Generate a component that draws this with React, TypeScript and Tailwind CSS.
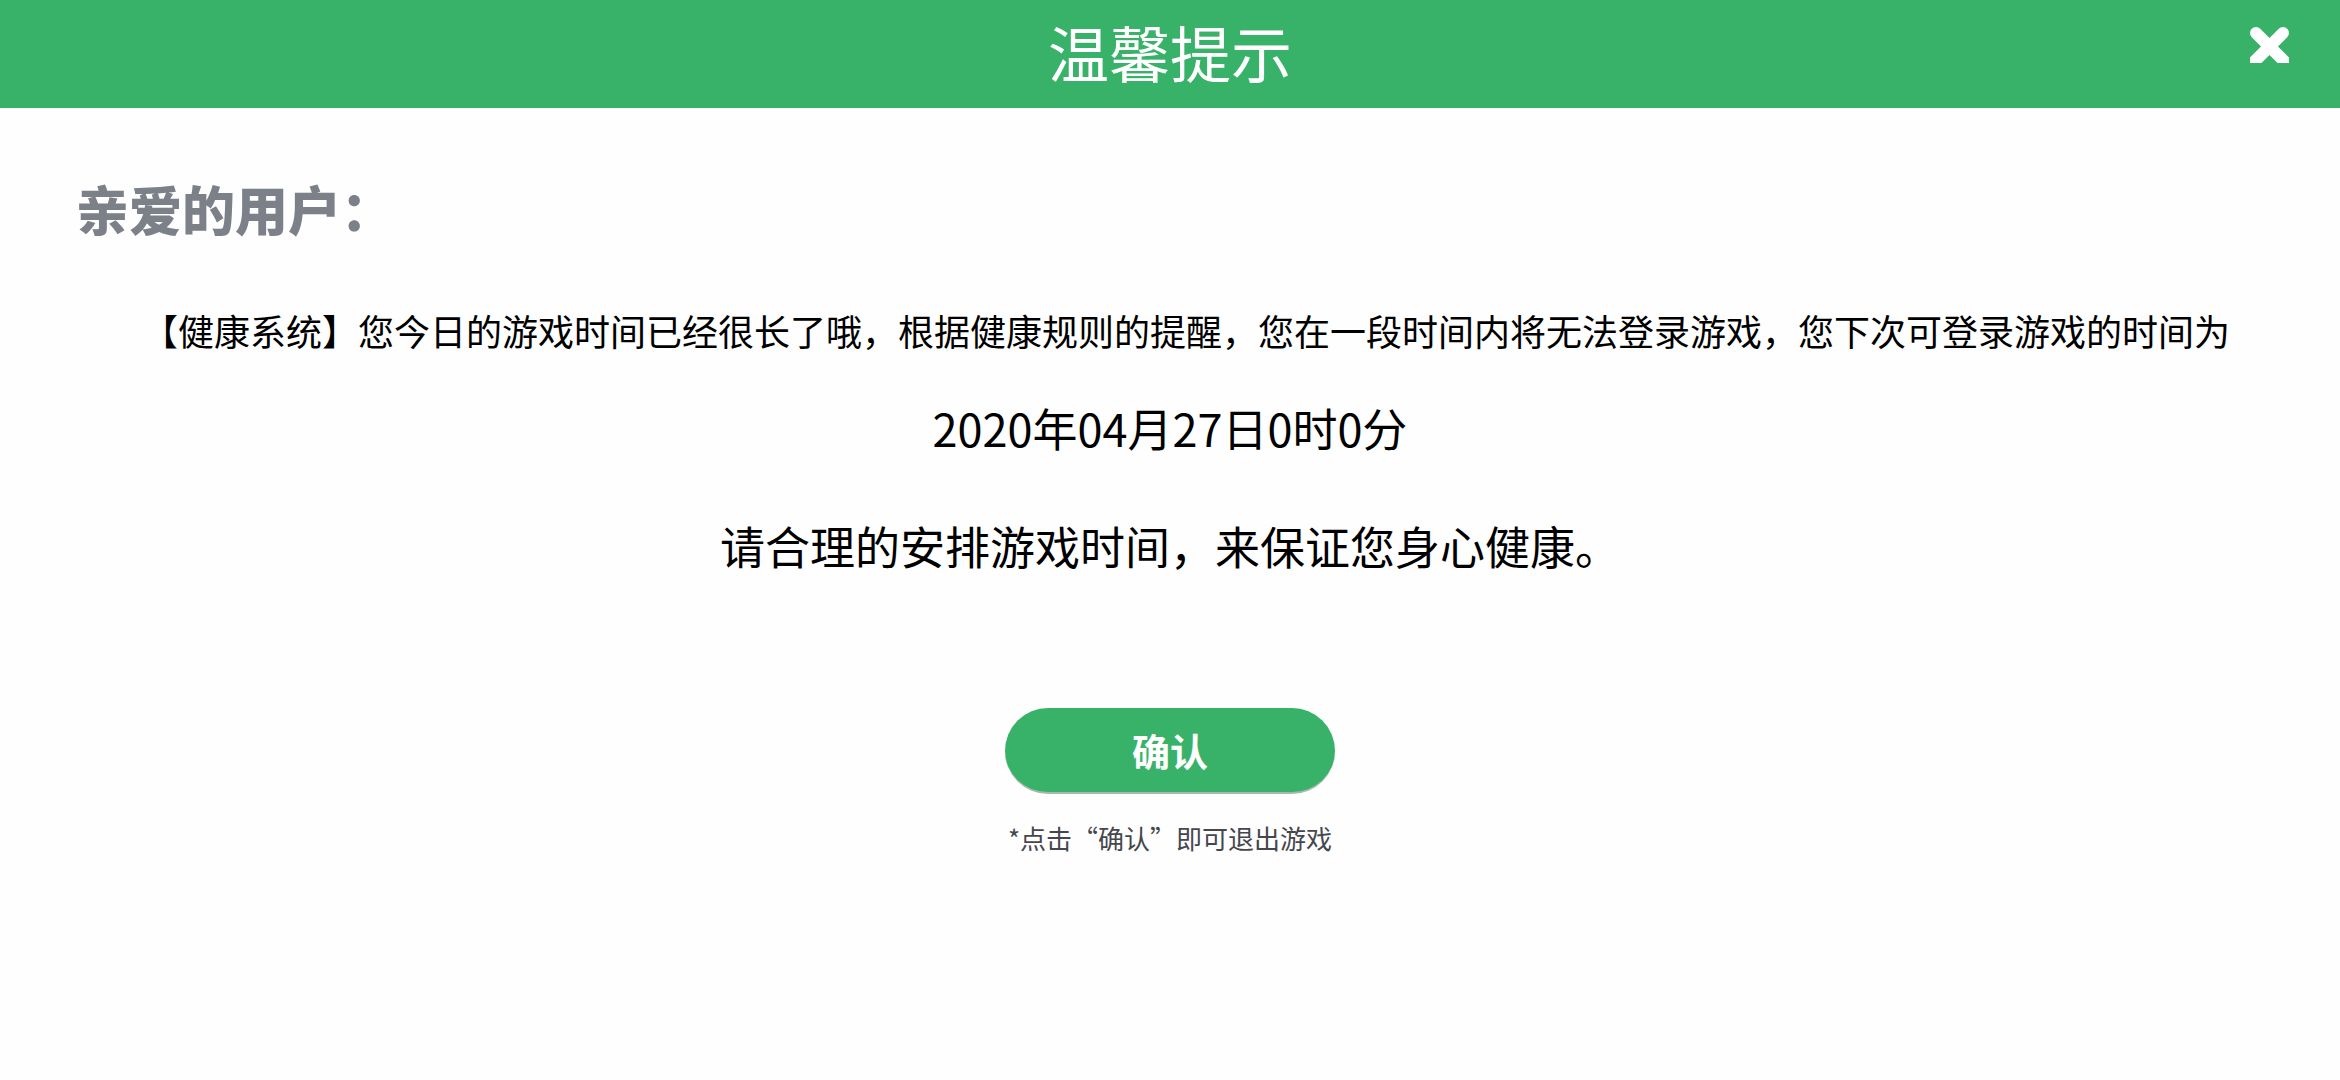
import React from 'react';

interface HeaderProps {
  title: string;
  onClose?: () => void;
}

const CloseIcon: React.FC = () => (
  <svg viewBox="0 0 39 36" className="w-[39px] h-9" aria-hidden="true">
    <path
      d="M6 6 L37 37 M33 6 L2 37"
      fill="none"
      stroke="currentColor"
      strokeWidth="12"
      strokeLinecap="round"
    />
  </svg>
);

const Header: React.FC<HeaderProps> = ({ title, onClose }) => (
  <header className="grid grid-cols-[1fr_auto_1fr] items-start h-[108px] bg-[#38b269] text-white">
    <h1 className="col-start-2 mt-3 text-[61px] leading-[80px]">{title}</h1>
    <button
      type="button"
      aria-label="关闭"
      onClick={onClose}
      className="justify-self-end mt-[27px] mr-[51px] cursor-pointer"
    >
      <CloseIcon />
    </button>
  </header>
);

const App: React.FC = () => {
  return (
    <div className="min-h-screen bg-[#fefefe] text-black font-['Noto_Sans_CJK_SC',sans-serif]" lang="zh-CN">
      <Header title="温馨提示" />

      <main className="flex flex-col items-center pt-[68px]">
        <h2 className="self-start pl-[76px] text-[53px] leading-[64px] font-black text-[#7c8088]">
          亲爱的用户：
        </h2>

        {/* Notice */}
        <p className="mt-[66px] pl-8 text-[36px] leading-[48px]">
          【健康系统】您今日的游戏时间已经很长了哦，根据健康规则的提醒，您在一段时间内将无法登录游戏，您下次可登录游戏的时间为
        </p>
        <p className="mt-12 text-[45px] leading-[52px]">2020年04月27日0时0分</p>
        <p className="mt-16 text-[45px] leading-[56px]">
          请合理的安排游戏时间，来保证您身心健康。
        </p>

        {/* Confirm */}
        <button
          type="button"
          className="mt-[134px] w-[330px] h-[86px] rounded-full border-b-2 border-[#a9b8af] bg-[#38b269] text-[38px] leading-[48px] font-bold text-white cursor-pointer"
        >
          确认
        </button>
        <p className="mt-7 text-[26px] leading-8 text-[#45474d]">
          *点击“确认”即可退出游戏
        </p>
      </main>
    </div>
  );
};

export default App;
